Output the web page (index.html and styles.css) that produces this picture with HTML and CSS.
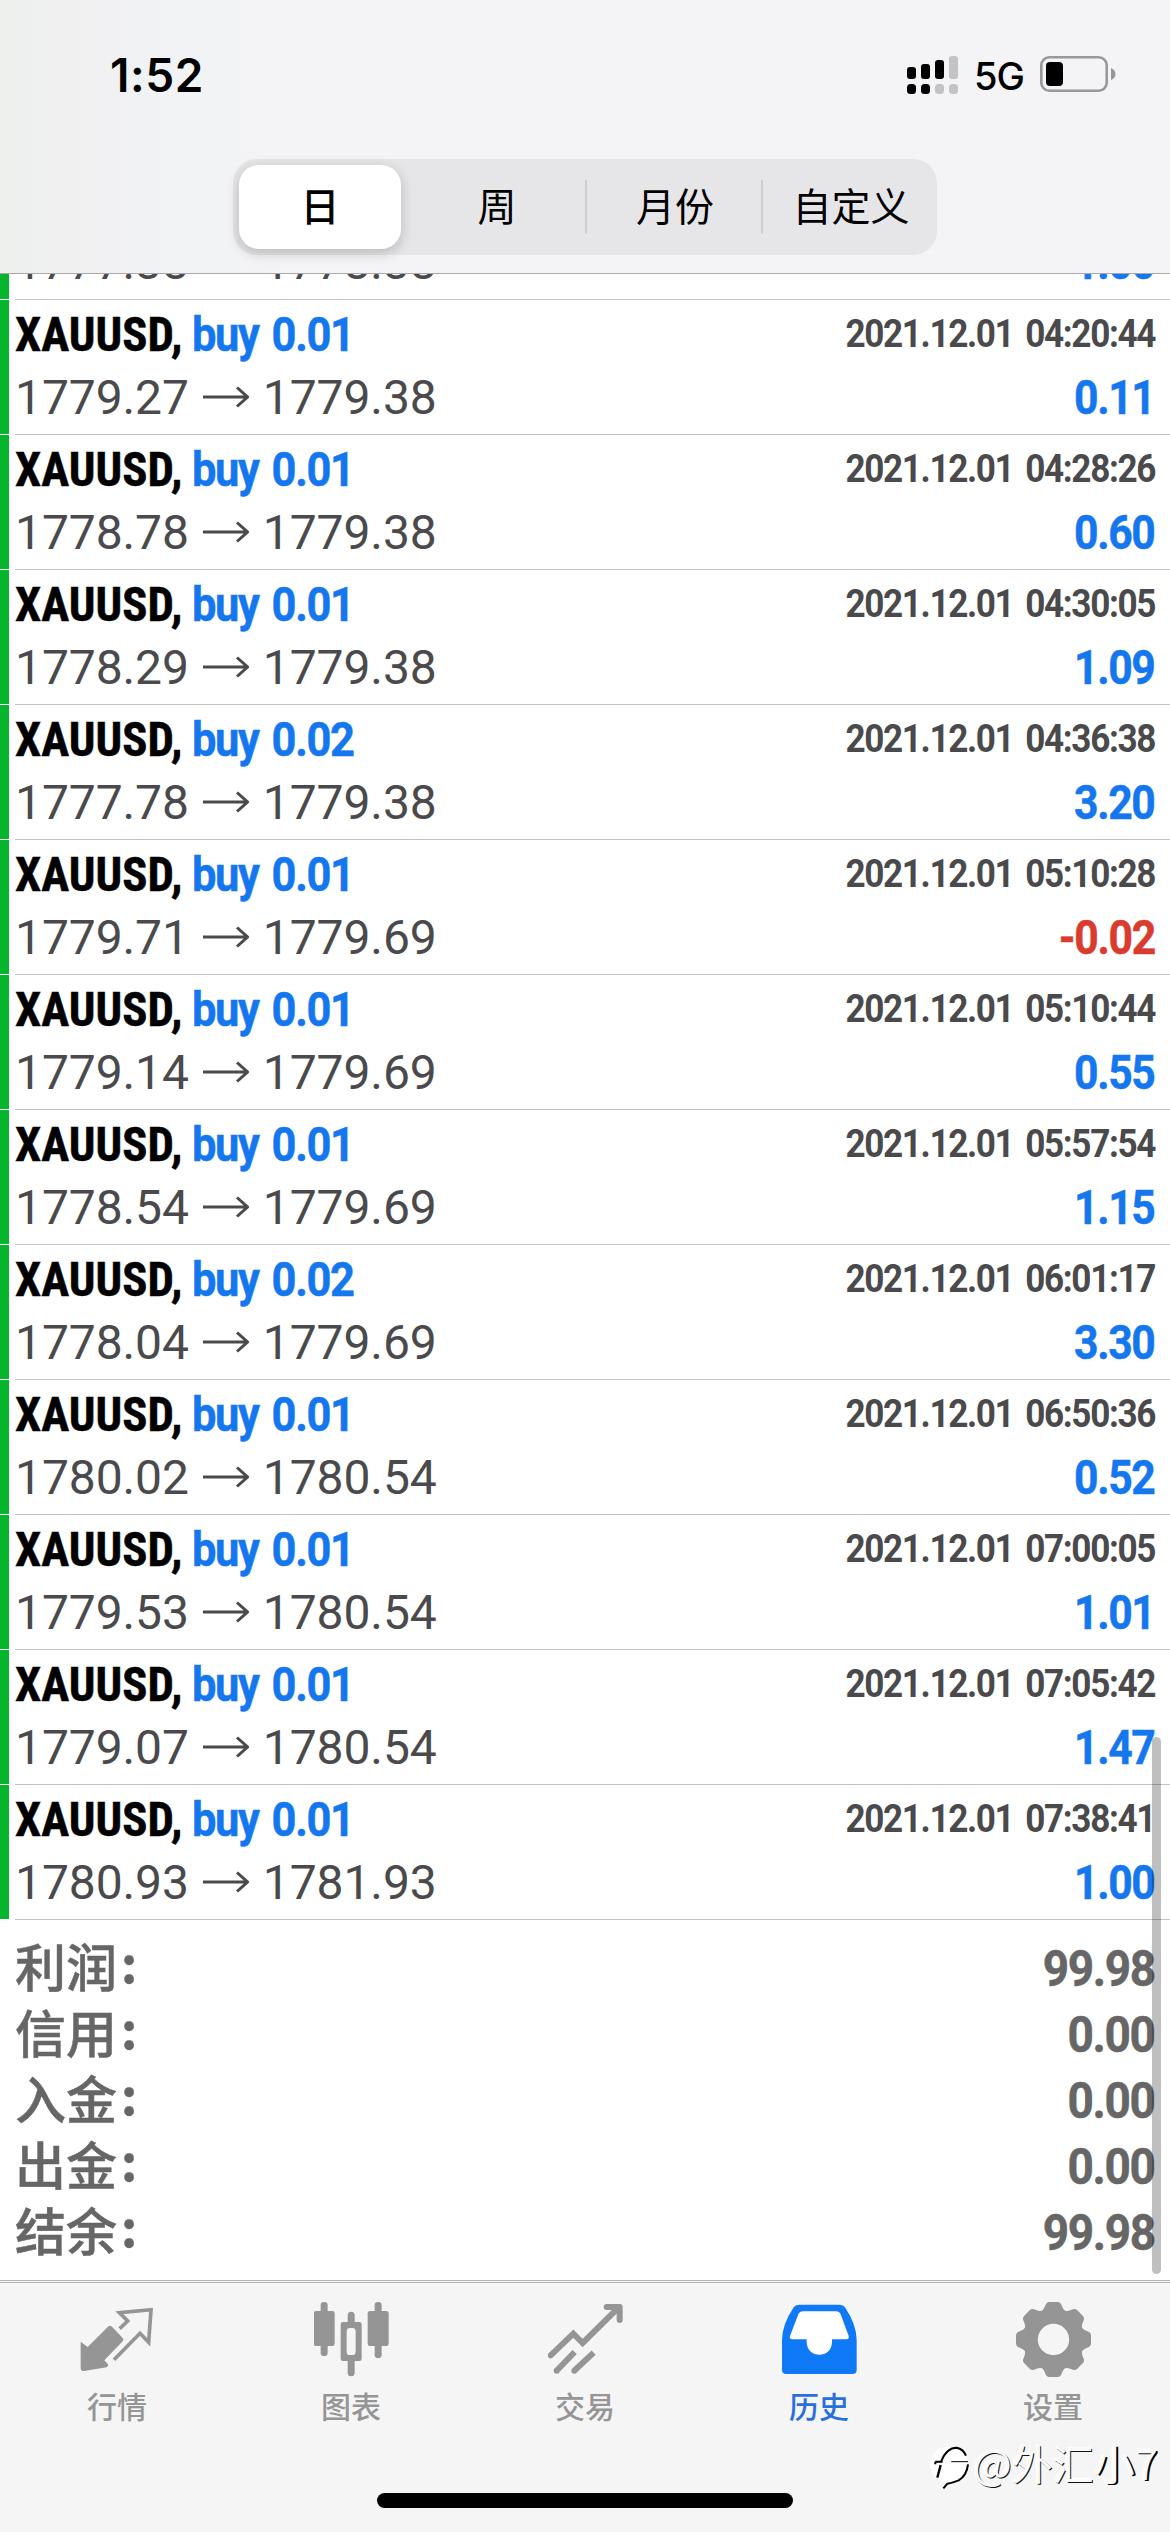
FILE: index.html
```html
<!DOCTYPE html>
<html lang="zh-CN">
<head>
<meta charset="utf-8">
<title>历史</title>
<link rel="stylesheet" href="styles.css">
</head>
<body>
<svg class="defs" width="0" height="0">
  <symbol id="arrow" viewBox="0 0 46 22"><path d="M0 11H44M34 1.5L44.5 11L34 20.5" fill="none" stroke="#4a4a4c" stroke-width="3"/></symbol>
</svg>
<header class="header">
  <div class="status">
    <span class="time">1:52</span>
    <div class="status-right">
      <svg class="signal" width="52" height="38" viewBox="0 0 52 38">
        <g fill="#000"><rect x="0" y="11" width="9" height="12" rx="3"/><rect x="14" y="8" width="9" height="15" rx="3"/><rect x="28" y="4" width="9" height="19" rx="3"/><rect x="0" y="28" width="9" height="10" rx="3.5"/><rect x="14" y="28" width="9" height="10" rx="3.5"/></g>
        <g fill="#c3c3c5"><rect x="42" y="0" width="9" height="23" rx="3"/><rect x="28" y="28" width="9" height="10" rx="3.5"/><rect x="42" y="28" width="9" height="10" rx="3.5"/></g>
      </svg>
      <span class="net">5G</span>
      <svg class="battery" width="76" height="36" viewBox="0 0 76 36">
        <rect x="1.3" y="1.3" width="65.4" height="33.4" rx="8" fill="none" stroke="#98989a" stroke-width="2.6"/>
        <rect x="6" y="6" width="17" height="24" rx="4"/>
        <path d="M71 12q4.500 2 4.500 6t-4.500 6z" fill="#98989a"/>
      </svg>
    </div>
  </div>
  <nav class="segments">
    <span class="seg active">日</span>
    <span class="seg">周</span>
    <span class="seg month">月份</span>
    <span class="seg custom">自定义</span>
  </nav>
</header>

<main class="list">
  <div class="row"><span class="sym">XAUUSD,</span><span class="side">buy 0.01</span><span class="date">2021.12.01 04:19:12</span><span class="price">1777.38<svg class="arrow"><use href="#arrow"/></svg>1778.38</span><span class="profit">1.00</span></div>
  <div class="row"><span class="sym">XAUUSD,</span><span class="side">buy 0.01</span><span class="date">2021.12.01 04:20:44</span><span class="price">1779.27<svg class="arrow"><use href="#arrow"/></svg>1779.38</span><span class="profit">0.11</span></div>
  <div class="row"><span class="sym">XAUUSD,</span><span class="side">buy 0.01</span><span class="date">2021.12.01 04:28:26</span><span class="price">1778.78<svg class="arrow"><use href="#arrow"/></svg>1779.38</span><span class="profit">0.60</span></div>
  <div class="row"><span class="sym">XAUUSD,</span><span class="side">buy 0.01</span><span class="date">2021.12.01 04:30:05</span><span class="price">1778.29<svg class="arrow"><use href="#arrow"/></svg>1779.38</span><span class="profit">1.09</span></div>
  <div class="row"><span class="sym">XAUUSD,</span><span class="side">buy 0.02</span><span class="date">2021.12.01 04:36:38</span><span class="price">1777.78<svg class="arrow"><use href="#arrow"/></svg>1779.38</span><span class="profit">3.20</span></div>
  <div class="row"><span class="sym">XAUUSD,</span><span class="side">buy 0.01</span><span class="date">2021.12.01 05:10:28</span><span class="price">1779.71<svg class="arrow"><use href="#arrow"/></svg>1779.69</span><span class="profit loss">-0.02</span></div>
  <div class="row"><span class="sym">XAUUSD,</span><span class="side">buy 0.01</span><span class="date">2021.12.01 05:10:44</span><span class="price">1779.14<svg class="arrow"><use href="#arrow"/></svg>1779.69</span><span class="profit">0.55</span></div>
  <div class="row"><span class="sym">XAUUSD,</span><span class="side">buy 0.01</span><span class="date">2021.12.01 05:57:54</span><span class="price">1778.54<svg class="arrow"><use href="#arrow"/></svg>1779.69</span><span class="profit">1.15</span></div>
  <div class="row"><span class="sym">XAUUSD,</span><span class="side">buy 0.02</span><span class="date">2021.12.01 06:01:17</span><span class="price">1778.04<svg class="arrow"><use href="#arrow"/></svg>1779.69</span><span class="profit">3.30</span></div>
  <div class="row"><span class="sym">XAUUSD,</span><span class="side">buy 0.01</span><span class="date">2021.12.01 06:50:36</span><span class="price">1780.02<svg class="arrow"><use href="#arrow"/></svg>1780.54</span><span class="profit">0.52</span></div>
  <div class="row"><span class="sym">XAUUSD,</span><span class="side">buy 0.01</span><span class="date">2021.12.01 07:00:05</span><span class="price">1779.53<svg class="arrow"><use href="#arrow"/></svg>1780.54</span><span class="profit">1.01</span></div>
  <div class="row"><span class="sym">XAUUSD,</span><span class="side">buy 0.01</span><span class="date">2021.12.01 07:05:42</span><span class="price">1779.07<svg class="arrow"><use href="#arrow"/></svg>1780.54</span><span class="profit">1.47</span></div>
  <div class="row"><span class="sym">XAUUSD,</span><span class="side">buy 0.01</span><span class="date">2021.12.01 07:38:41</span><span class="price">1780.93<svg class="arrow"><use href="#arrow"/></svg>1781.93</span><span class="profit">1.00</span></div>
</main>

<section class="summary">
  <div class="total"><span class="label">利润<i class="colon">:</i></span><span class="value">99.98</span></div>
  <div class="total"><span class="label">信用<i class="colon">:</i></span><span class="value">0.00</span></div>
  <div class="total"><span class="label">入金<i class="colon">:</i></span><span class="value">0.00</span></div>
  <div class="total"><span class="label">出金<i class="colon">:</i></span><span class="value">0.00</span></div>
  <div class="total"><span class="label">结余<i class="colon">:</i></span><span class="value">99.98</span></div>
</section>
<div class="scrollbar"></div>

<footer class="tabbar">
  <div class="tabs">
    <div class="tab">
      <svg width="75" height="75" viewBox="28 36 225 225" fill="currentColor">
        <path d="M30 155L51 171L112 110Q118 105 124 110L156 144Q161 149 156 154L101 211L112 223Q115 228 108 232L40 243Q30 243 30 233Z"/>
        <path d="M147 116L171 93L146 68L241 59L234 157L208 130L130 209" fill="none" stroke="currentColor" stroke-width="11"/>
      </svg>
      <span>行情</span>
    </div>
    <div class="tab">
      <svg width="75" height="75" viewBox="730 36 225 225" fill="currentColor">
        <rect x="750" y="36" width="21" height="162" rx="10"/><rect x="729" y="63" width="63" height="105" rx="7"/>
        <rect x="912" y="36" width="21" height="168" rx="10"/><rect x="891" y="63" width="63" height="105" rx="7"/>
        <path d="M831 96V76a10.500 10.500 0 0 1 21 0V96H866q7 0 7 7V206q0 7-7 7H852V248a10.500 10.500 0 0 1-21 0V213H817q-7 0-7-7V103q0-7 7-7ZM838 114q-10 0-10 10V185q0 10 10 10H845q10 0 10-10V124q0-10-10-10Z" fill-rule="evenodd"/>
      </svg>
      <span>图表</span>
    </div>
    <div class="tab">
      <svg width="75" height="75" viewBox="52 36 225 225" fill="none" stroke="currentColor" stroke-width="18">
        <path d="M60 196L128 131L156 159L264 52" stroke-linecap="round"/>
        <path d="M228 51H267V90" stroke-linecap="round" stroke-linejoin="round"/>
        <path d="M132 186L80 240M189 188L133 240"/>
        <g fill="currentColor" stroke="none"><circle cx="78" cy="242" r="9"/><circle cx="131" cy="242" r="9"/></g>
      </svg>
      <span>交易</span>
    </div>
    <div class="tab current">
      <svg width="75" height="75" viewBox="754 36 225 225">
        <path d="M805 44H927Q938 44 943 52Q978 105 978 150V239Q978 252 965 252H767Q754 252 754 239V150Q754 105 789 52Q794 44 805 44Z" fill="currentColor"/>
        <path d="M817 64H916Q926 64 930 73L954 138Q956 148 947 148H904V155C904 207 828 207 828 155V148H785Q775 148 778 138L803 73Q807 64 817 64Z" fill="#fff"/>
      </svg>
      <span>历史</span>
    </div>
    <div class="tab">
      <svg width="75" height="75" viewBox="76 36 225 225" fill="currentColor">
        <defs><path id="tooth" d="M148 66Q158 62 163 49Q167 36 176 36H201Q210 36 214 49Q219 62 229 66V90H148Z"/></defs>
        <use href="#tooth"/>
        <use href="#tooth" transform="rotate(45 188.500 148.500)"/>
        <use href="#tooth" transform="rotate(90 188.500 148.500)"/>
        <use href="#tooth" transform="rotate(135 188.500 148.500)"/>
        <use href="#tooth" transform="rotate(180 188.500 148.500)"/>
        <use href="#tooth" transform="rotate(225 188.500 148.500)"/>
        <use href="#tooth" transform="rotate(270 188.500 148.500)"/>
        <use href="#tooth" transform="rotate(315 188.500 148.500)"/>
        <circle cx="188.500" cy="148.500" r="66" fill="none" stroke="currentColor" stroke-width="38"/>
      </svg>
      <span>设置</span>
    </div>
  </div>
  <div class="home"></div>
</footer>

<div class="watermark">
  <svg width="42" height="46" viewBox="0 0 126 138">
    <path d="M62 12C28 12 6 34 6 64C6 92 26 112 50 114L44 134Q54 120 74 118C102 116 120 94 120 66C120 32 96 12 62 12Z" fill="#fff"/>
    <path d="M40 54Q56 14 86 14Q106 18 114 38M22 56H44M22 56V64M120 64Q116 98 92 112Q72 120 58 122L46 136" fill="none" stroke="#000" stroke-width="6"/>
    <path d="M70 56H120" stroke="#000" stroke-width="3"/>
    <path d="M38 66L28 104" stroke="#000" stroke-width="7"/>
  </svg>
  <span class="handle">@外汇<b>小7</b></span>
</div>
</body>
</html>
```
FILE: styles.css
```css
* { box-sizing: border-box; }

body {
  margin: 0;
  position: relative;
  width: 1170px;
  height: 2532px;
  overflow: hidden;
  background: #fff;
  font-family: Roboto, "Noto Sans CJK SC", sans-serif;
}

.defs { position: absolute; }

/* header */
.header {
  position: relative;
  z-index: 1;
  height: 274px;
  background: linear-gradient(90deg, #edf0ed 0, #f0f0f1 60px, #f2f3f5 180px, #f4f4f6 300px, #f4f4f6 100%);
  border-bottom: 1px solid #a9a9ab;
}

.status {
  display: flex;
  justify-content: space-between;
  height: 159px;
  padding: 0 54px 0 110px;
}

.time {
  padding-top: 47px;
  font: 600 46px/56px Inter, sans-serif;
  letter-spacing: .6px;
}

.status-right { display: flex; }
.signal { margin-top: 56px; }
.net {
  width: 66px;
  margin: 54px 0 0 15px;
  font: 500 38px/44px Inter, sans-serif;
  letter-spacing: -1px;
}
.battery { margin-top: 56px; }

.segments {
  display: grid;
  grid-template-columns: 170px 176px 178px 168px;
  width: 704px;
  height: 96px;
  margin-left: 233px;
  padding: 6px;
  border-radius: 24px;
  background: #e6e6e8;
}

.seg {
  display: flex;
  align-items: center;
  justify-content: center;
  font: 400 39px/1 "Noto Sans CJK SC", sans-serif;
  padding-bottom: 5px;
}
.seg.active {
  width: 162px;
  font-weight: 500;
  border-radius: 20px;
  background: #fff;
  box-shadow: 0 4px 14px rgba(0, 0, 0, .2);
}
.seg.month {
  height: 54px;
  margin-top: 15px;
  padding: 0 0 5px 2px;
  border: solid #cfcfd2;
  border-width: 0 2px;
}
.seg.custom { padding-left: 8px; }

/* deals */
.list { margin-top: -109px; }

.row {
  position: relative;
  display: grid;
  grid-template-columns: 177px 323px 1fr;
  grid-template-rows: 63px 63px;
  height: 135px;
  padding: 3px 15px 0;
  background:
    linear-gradient(#06b52b, #06b52b) 0 0 / 9px 134px no-repeat,
    linear-gradient(#c2c4c4, #c2c4c4) 15px 134px / 100% 1px no-repeat;
  line-height: 63px;
  white-space: nowrap;
}

.sym, .side, .date, .profit {
  font-size: 48px;
  font-weight: 700;
}
.sym {
  font-family: "Roboto Condensed", Roboto, sans-serif;
  color: #000;
  transform: scaleX(.975);
  transform-origin: 0 0;
  -webkit-text-stroke: .5px;
}
.side {
  color: #1577ee;
  letter-spacing: -1.5px;
  word-spacing: 4px;
  transform: scaleX(.905);
  transform-origin: 0 0;
  -webkit-text-stroke: .5px;
}
.row .date {
  justify-self: end;
  font-size: 39px;
  letter-spacing: -1.5px;
  word-spacing: 5px;
  color: #4a4a4c;
  transform: scaleX(.9);
  transform-origin: 100% 0;
}
.price {
  grid-column: 1 / 3;
  font-size: 48px;
  letter-spacing: -.1px;
  color: #4a4a4c;
}
.arrow {
  width: 46px;
  height: 22px;
  margin: 0 14px 6px 14px;
}
.profit {
  justify-self: end;
  color: #1577ee;
  letter-spacing: -1.5px;
  transform: scaleX(.89);
  transform-origin: 100% 0;
  -webkit-text-stroke: .5px;
}
.loss { color: #d93c2f; }

/* totals */
.summary {
  height: 360px;
  padding: 16px 15px 0;
  color: #666;
}
.total {
  display: flex;
  justify-content: space-between;
  height: 66px;
  line-height: 66px;
}
.label {
  font: 500 51px/58px "Noto Sans CJK SC", sans-serif;
  -webkit-text-stroke: .5px;
}
.colon {
  display: inline-block;
  margin-left: 4px;
  font: 700 50px/50px "Noto Sans CJK SC", sans-serif;
  transform: translateY(-4px);
}
.value {
  font-size: 50px;
  font-weight: 700;
  letter-spacing: -1.5px;
  transform: scaleX(.92);
  transform-origin: 100% 0;
  -webkit-text-stroke: .5px;
}

.scrollbar {
  position: absolute;
  left: 1152px;
  top: 1737px;
  width: 9px;
  height: 537px;
  border-radius: 5px;
  background: rgba(0, 0, 0, .25);
}

/* tab bar */
.tabbar {
  height: 252px;
  border-top: 3px double #b4b6b6;
  background: #f5f5f5;
}
.tabs {
  display: grid;
  grid-template-columns: repeat(5, 1fr);
  height: 210px;
  padding-top: 19px;
}
.tab {
  display: flex;
  flex-direction: column;
  align-items: center;
  gap: 10px;
  color: #959595;
  font: 500 30px/36px "Noto Sans CJK SC", sans-serif;
}
.current { color: #0f79f8; }
.current span { color: #2a70dc; }

.home {
  width: 416px;
  height: 15px;
  margin: 0 auto;
  border-radius: 8px;
  background: #000;
}

.watermark {
  position: absolute;
  left: 928px;
  top: 2443px;
  display: flex;
  gap: 3px;
}
.handle {
  font: 400 41px/38px "Noto Sans CJK SC", sans-serif;
  color: #fafafa;
  text-shadow: 1px 1px 0 #111, -1px -1px 1px #fff;
  white-space: nowrap;
}
.handle b {
  font-weight: 400;
  text-shadow: 2px 1px 0 #000, -1px -1px 1px #fff;
}
```
